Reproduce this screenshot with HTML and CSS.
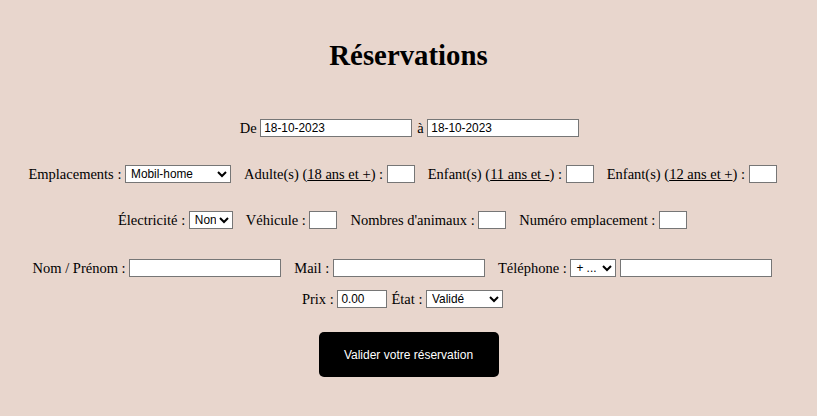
FILE: index.html
```html
<!DOCTYPE html>
<html lang="fr">
<head>
<meta charset="utf-8">
<title>Réservations</title>
<link rel="stylesheet" href="styles.css">
</head>
<body>
<h1 class="title">Réservations</h1>
<form class="form">
  <div class="row row-dates">
    <span class="field">De <input class="txt" type="text" value="18-10-2023"></span>
    <span class="field">à <input class="txt" type="text" value="18-10-2023"></span>
  </div>
  <div class="row row-shift">
    <span class="field">Emplacements : <select class="sel sel-emp"><option>Mobil-home</option></select></span>
    <span class="field">Adulte(s) (<u>18 ans et +</u>) : <input class="txt small" type="text"></span>
    <span class="field">Enfant(s) (<u>11 ans et -</u>) : <input class="txt small" type="text"></span>
    <span class="field">Enfant(s) (<u>12 ans et +</u>) : <input class="txt small" type="text"></span>
  </div>
  <div class="row row-shift">
    <span class="field">Électricité : <select class="sel sel-non"><option>Non</option></select></span>
    <span class="field">Véhicule : <input class="txt small" type="text"></span>
    <span class="field">Nombres d'animaux : <input class="txt small" type="text"></span>
    <span class="field">Numéro emplacement : <input class="txt small" type="text"></span>
  </div>
  <div class="row row-contact row-shift">
    <span class="field">Nom / Prénom : <input class="txt" type="text"></span>
    <span class="field">Mail : <input class="txt" type="text"></span>
    <span class="field">Téléphone : <select class="sel sel-tel"><option>+ ...</option></select><input class="txt tel" type="text"></span>
  </div>
  <div class="row row-tight row-price row-shift">
    <span class="field">Prix : <input class="txt price" type="text" value="0.00"></span>
    <span class="field">État : <select class="sel sel-etat"><option>Validé</option></select></span>
  </div>
  <button class="submit" type="button">Valider votre réservation</button>
</form>
</body>
</html>
```
FILE: styles.css
```css
html, body {
  margin: 0;
  padding: 0;
}
body {
  background: #e8d6cd;
  font-family: "Liberation Serif", "Times New Roman", serif;
  font-size: 14.5px;
  color: #000;
}
.title {
  margin: 0;
  padding-top: 39px;
  height: 32px;
  line-height: 32px;
  font-size: 28.8px;
  font-weight: bold;
  text-align: center;
}
.form {
  display: flex;
  flex-direction: column;
  align-items: center;
  padding-top: 47px;
}
.row {
  display: flex;
  justify-content: center;
  align-items: center;
  gap: 13px;
  height: 20px;
  margin-bottom: 26px;
  white-space: pre;
}
.row-shift {
  padding-right: 12px;
}
.row-dates {
  gap: 5px;
  padding-left: 2px;
}
.row-tight {
  gap: 4px;
}
.row-contact {
  margin-top: 2px;
  margin-bottom: 11px;
}
.row-price {
  margin-bottom: 23px;
}
.field {
  display: inline-flex;
  align-items: center;
}
.txt, .sel {
  box-sizing: border-box;
  height: 18px;
  border: 1px solid #767676;
  border-radius: 0;
  background: #fff;
  color: #000;
  font-family: "Liberation Sans", Arial, sans-serif;
  font-size: 11.85px;
  margin: 0;
}
.txt {
  width: 152px;
  padding: 0 3px;
}
.txt.small {
  width: 28px;
}
.txt.price {
  width: 50px;
}
.txt.tel {
  margin-left: 4px;
}
.sel {
  padding: 0 0 0 1px;
}
.sel-emp { width: 106px; }
.sel-non { width: 44px; }
.sel-tel { width: 46px; }
.sel-etat { width: 77px; }
.submit {
  width: 180px;
  height: 45px;
  border: none;
  border-radius: 5px;
  background: #000;
  color: #fff;
  font-family: "Liberation Sans", Arial, sans-serif;
  font-size: 12px;
  cursor: pointer;
}
```
